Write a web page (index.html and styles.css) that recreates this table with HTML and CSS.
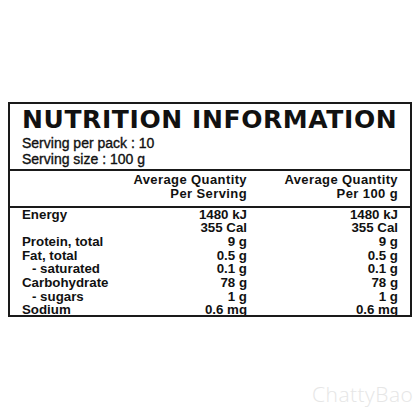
FILE: index.html
```html
<!DOCTYPE html>
<html lang="en">
<head>
    <meta charset="UTF-8">
    <title>Nutrition Information</title>
    <link rel="stylesheet" href="styles.css">
</head>
<body>

    <div class="label">
        <header class="label-head">
            <h1>NUTRITION INFORMATION</h1>
            <div class="serving">
                <p>Serving per pack : 10</p>
                <p>Serving size : 100 g</p>
            </div>
        </header>

        <div class="col-head">
            <div></div>
            <div>Average Quantity<br>Per Serving</div>
            <div>Average Quantity<br>Per 100 g</div>
        </div>

        <div class="rows">
            <div class="row"><span>Energy</span><span>1480 kJ</span><span>1480 kJ</span></div>
            <div class="row"><span></span><span>355 Cal</span><span>355 Cal</span></div>
            <div class="row"><span>Protein, total</span><span>9 g</span><span>9 g</span></div>
            <div class="row"><span>Fat, total</span><span>0.5 g</span><span>0.5 g</span></div>
            <div class="row sub"><span>- saturated</span><span>0.1 g</span><span>0.1 g</span></div>
            <div class="row"><span>Carbohydrate</span><span>78 g</span><span>78 g</span></div>
            <div class="row sub"><span>- sugars</span><span>1 g</span><span>1 g</span></div>
            <div class="row"><span>Sodium</span><span>0.6 mg</span><span>0.6 mg</span></div>
        </div>
    </div>

    <div class="watermark">ChattyBao</div>

</body>
</html>
```

FILE: styles.css
```css
/* --- Page --- */
* {
    box-sizing: border-box;
    margin: 0;
    padding: 0;
}

body {
    width: 420px;
    height: 420px;
    padding: 102px 8px 0 8px;
    background: #ffffff;
    color: #111111;
    font-family: "Liberation Sans", Arial, sans-serif;
    position: relative;
    overflow: hidden;
}

/* --- Label box --- */
.label {
    width: 404px;
    height: 215px;
    border: 2px solid #1a1a1a;
    overflow: hidden;
}

.label-head {
    padding: 4px 12px 2px 12px;
    border-bottom: 2px solid #1a1a1a;
}

.label-head h1 {
    font-family: "DejaVu Sans", sans-serif;
    font-weight: 700;
    font-size: 25px;
    line-height: 24px;
    letter-spacing: 0.6px;
    white-space: nowrap;
}

.serving {
    margin-top: 2.5px;
}

.serving p {
    font-size: 14px;
    line-height: 16px;
    -webkit-text-stroke: 0.35px #111111;
}

/* --- Column headings --- */
.col-head,
.row {
    display: grid;
    grid-template-columns: 1fr 124px 151px;
    padding: 0 12px 0 12px;
}

.col-head {
    padding-top: 2px;
    padding-bottom: 5px;
    border-bottom: 2px solid #1a1a1a;
    font-weight: 700;
    font-size: 13px;
    line-height: 14px;
    letter-spacing: 0.4px;
    text-align: right;
}

/* --- Rows --- */
.rows {
    font-weight: 700;
    font-size: 13.3px;
    line-height: 13.7px;
}

.row span:nth-child(n+2) {
    text-align: right;
}

.row.sub span:first-child {
    padding-left: 10px;
}

/* --- Watermark --- */
.watermark {
    position: absolute;
    left: 312px;
    top: 380px;
    font-family: "Open Sans", sans-serif;
    font-weight: 300;
    font-size: 21px;
    letter-spacing: 0.5px;
    color: #e6e6e6;
}
```
